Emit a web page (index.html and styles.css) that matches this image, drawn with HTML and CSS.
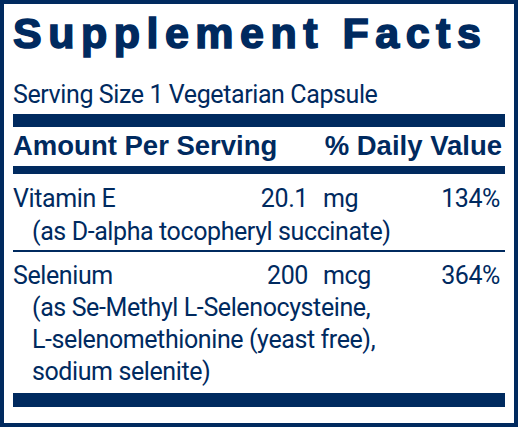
FILE: index.html
```html
<!DOCTYPE html>
<html lang="en">
<head>
    <meta charset="UTF-8">
    <meta name="viewport" content="width=device-width, initial-scale=1.0">
    <title>Supplement Facts</title>
    <link rel="stylesheet" href="styles.css">
</head>
<body>
    <div class="label">
        <h1 class="title">Supplement Facts</h1>
        <p class="serving">Serving Size 1 Vegetarian Capsule</p>
        <div class="bar thick"></div>

        <div class="head">
            <span>Amount Per Serving</span>
            <span class="head-dv">% Daily Value</span>
        </div>
        <div class="bar medium"></div>

        <div class="row">
            <span class="name">Vitamin E</span>
            <span class="amount">20.1</span>
            <span class="unit">mg</span>
            <span class="dv">134%</span>
            <span class="source">(as D-alpha tocopheryl succinate)</span>
        </div>
        <div class="rule"></div>

        <div class="row row-last">
            <span class="name">Selenium</span>
            <span class="amount">200</span>
            <span class="unit">mcg</span>
            <span class="dv">364%</span>
            <span class="source">(as Se-Methyl L-Selenocysteine,<br>L-selenomethionine (yeast free),<br>sodium selenite)</span>
        </div>
        <div class="bar bottom"></div>
    </div>
</body>
</html>
```

FILE: styles.css
```css
body {
    margin: 0;
    background: #ffffff;
}

.label {
    box-sizing: border-box;
    width: 518px;
    height: 427px;
    border: 4px solid #002a5f;
    padding: 0 9px;
    color: #002a5f;
    font-family: Roboto, "Liberation Sans", Arial, sans-serif;
}

.title {
    margin: 0;
    padding-top: 4px;
    font-family: "Liberation Sans", Arial, sans-serif;
    font-size: 43px;
    font-weight: 700;
    line-height: 50px;
    letter-spacing: 6.5px;
    -webkit-text-stroke: 1.6px #002a5f;
    white-space: nowrap;
}

.serving {
    margin: 22px 0 0;
    font-size: 25px;
    line-height: 30px;
    letter-spacing: -0.4px;
}

.bar {
    background: #002a5f;
}

.thick {
    height: 13px;
    margin-top: 4px;
}

.head {
    display: flex;
    justify-content: space-between;
    padding: 2px 3px 0 0;
    font-family: "Liberation Sans", Arial, sans-serif;
    font-size: 27.5px;
    font-weight: 700;
    line-height: 33px;
}

.medium {
    height: 8px;
    margin-top: 4px;
}

.row {
    display: grid;
    grid-template-columns: 200px 80px 80px 1fr;
    column-gap: 15px;
    padding: 8px 0 2px;
    font-size: 25px;
    line-height: 33px;
    letter-spacing: -0.4px;
}

.row-last {
    line-height: 32px;
    padding-bottom: 5px;
}

.amount {
    text-align: right;
}

.dv {
    text-align: right;
    padding-right: 5px;
}

.source {
    grid-column: 1 / -1;
    padding-left: 19px;
}

.rule {
    height: 2px;
    background: #002a5f;
}

.bottom {
    height: 14px;
}
```
